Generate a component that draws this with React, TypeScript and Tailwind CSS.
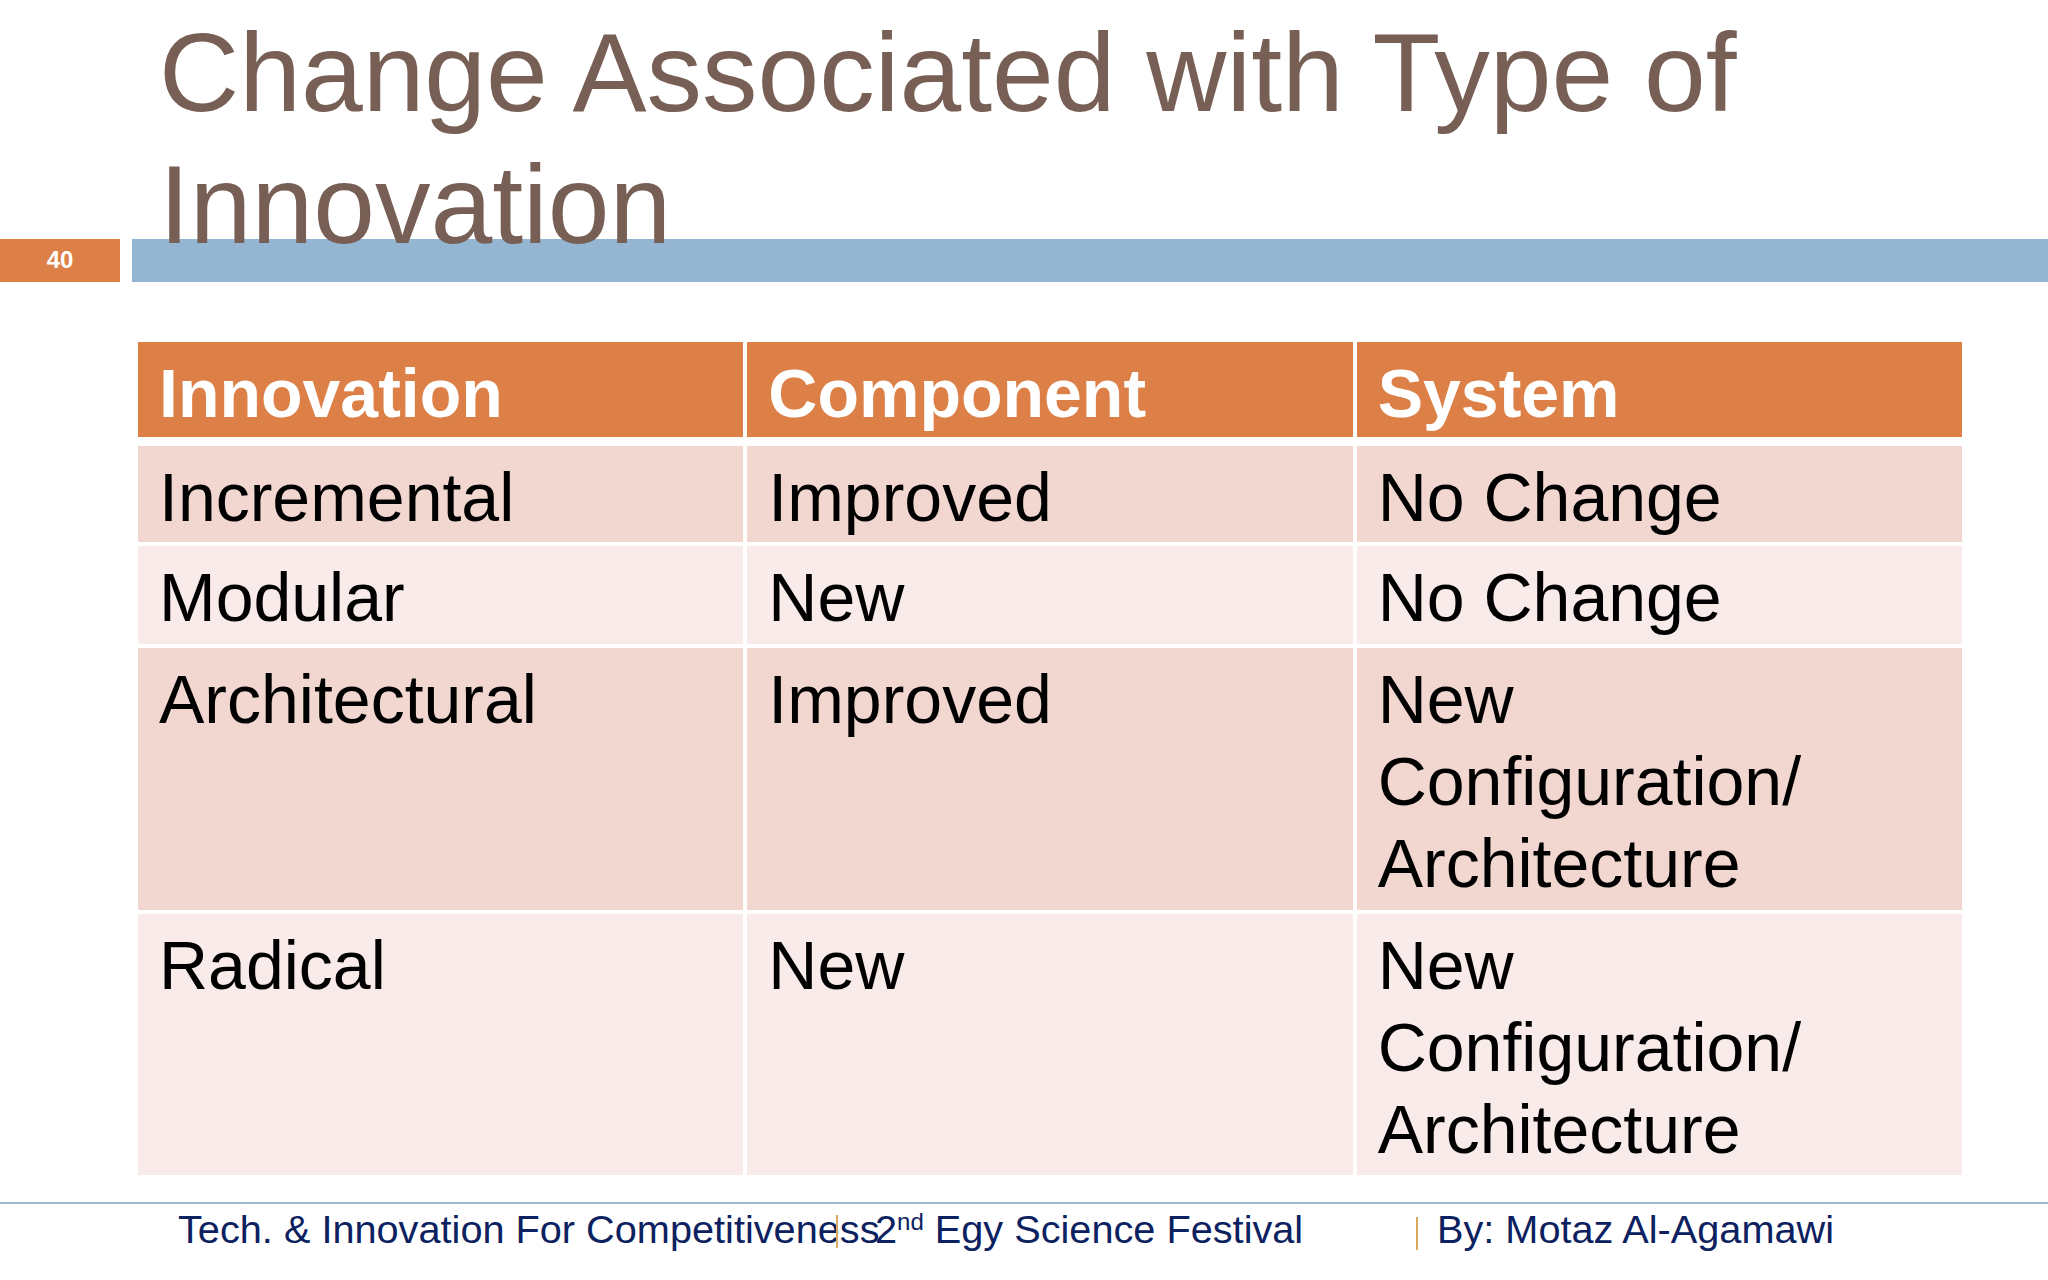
import React from "react";

const rows: { cells: string[][]; h: string; bg: string }[] = [
  { cells: [["Incremental"], ["Improved"], ["No Change"]], h: "h-[96px]", bg: "bg-[#F1D7CF]" },
  { cells: [["Modular"], ["New"], ["No Change"]], h: "h-[98px]", bg: "bg-[#F9EBEA]" },
  {
    cells: [["Architectural"], ["Improved"], ["New", "Configuration/", "Architecture"]],
    h: "h-[262px]",
    bg: "bg-[#F1D7CF]",
  },
  {
    cells: [["Radical"], ["New"], ["New", "Configuration/", "Architecture"]],
    h: "h-[261px]",
    bg: "bg-[#F9EBEA]",
  },
];

export default function App() {
  return (
    <div className="w-[2048px] h-[1280px] bg-white overflow-hidden font-['Liberation_Sans',Arial,sans-serif]">
      {/* Title */}
      <div className="relative z-10 h-[239px] pl-[159px] pt-[7px] text-[111px] leading-[132px] text-[#775F55] whitespace-nowrap">
        Change Associated with Type of
        <br />
        Innovation
      </div>

      {/* Bar row */}
      <div className="flex gap-[12px] h-[43px]">
        <div className="w-[120px] bg-[#DD8047] flex items-center justify-center text-white font-bold text-[24px] leading-none pb-[2px]">
          40
        </div>
        <div className="flex-1 bg-[#94B6D2]" />
      </div>

      {/* Table */}
      <div className="mt-[60px] ml-[138px] w-[1824px] flex flex-col">
        <div className="grid grid-cols-3 gap-x-[4px] h-[95px]">
          {["Innovation", "Component", "System"].map((t) => (
            <div
              key={t}
              className="bg-[#DD8047] text-white font-bold text-[68px] leading-[82px] pt-[10px] px-[21px] whitespace-nowrap"
            >
              {t}
            </div>
          ))}
        </div>
        <div className="mt-[9px] flex flex-col gap-y-[4px]">
          {rows.map((r, i) => (
            <div key={i} className={`grid grid-cols-3 gap-x-[4px] ${r.h}`}>
              {r.cells.map((lines, j) => (
                <div
                  key={j}
                  className={`${r.bg} text-black text-[68px] leading-[82px] pt-[10px] px-[21px] whitespace-nowrap`}
                >
                  {lines.map((l, k) => (
                    <div key={k}>{l}</div>
                  ))}
                </div>
              ))}
            </div>
          ))}
        </div>
      </div>

      {/* Footer line */}
      <div className="mt-[27px] h-[2px] w-full bg-[#9DB9D4]" />

      {/* Footer */}
      <div className="mt-[3px] flex items-start pl-[178px] text-[39.7px] leading-[45px] text-[#0C2160] whitespace-nowrap">
        <div className="w-[658px]">Tech. &amp; Innovation For Competitiveness</div>
        <div className="w-[2px] h-[33px] mt-[8px] bg-[#D9A961] shrink-0" />
        <div className="ml-[37px] w-[541px]">
          2<sup className="text-[24px] top-[-13px]">nd</sup> Egy Science Festival
        </div>
        <div className="w-[2px] h-[33px] mt-[10px] bg-[#D9A961] shrink-0" />
        <div className="ml-[19px]">By: Motaz Al-Agamawi</div>
      </div>
    </div>
  );
}
